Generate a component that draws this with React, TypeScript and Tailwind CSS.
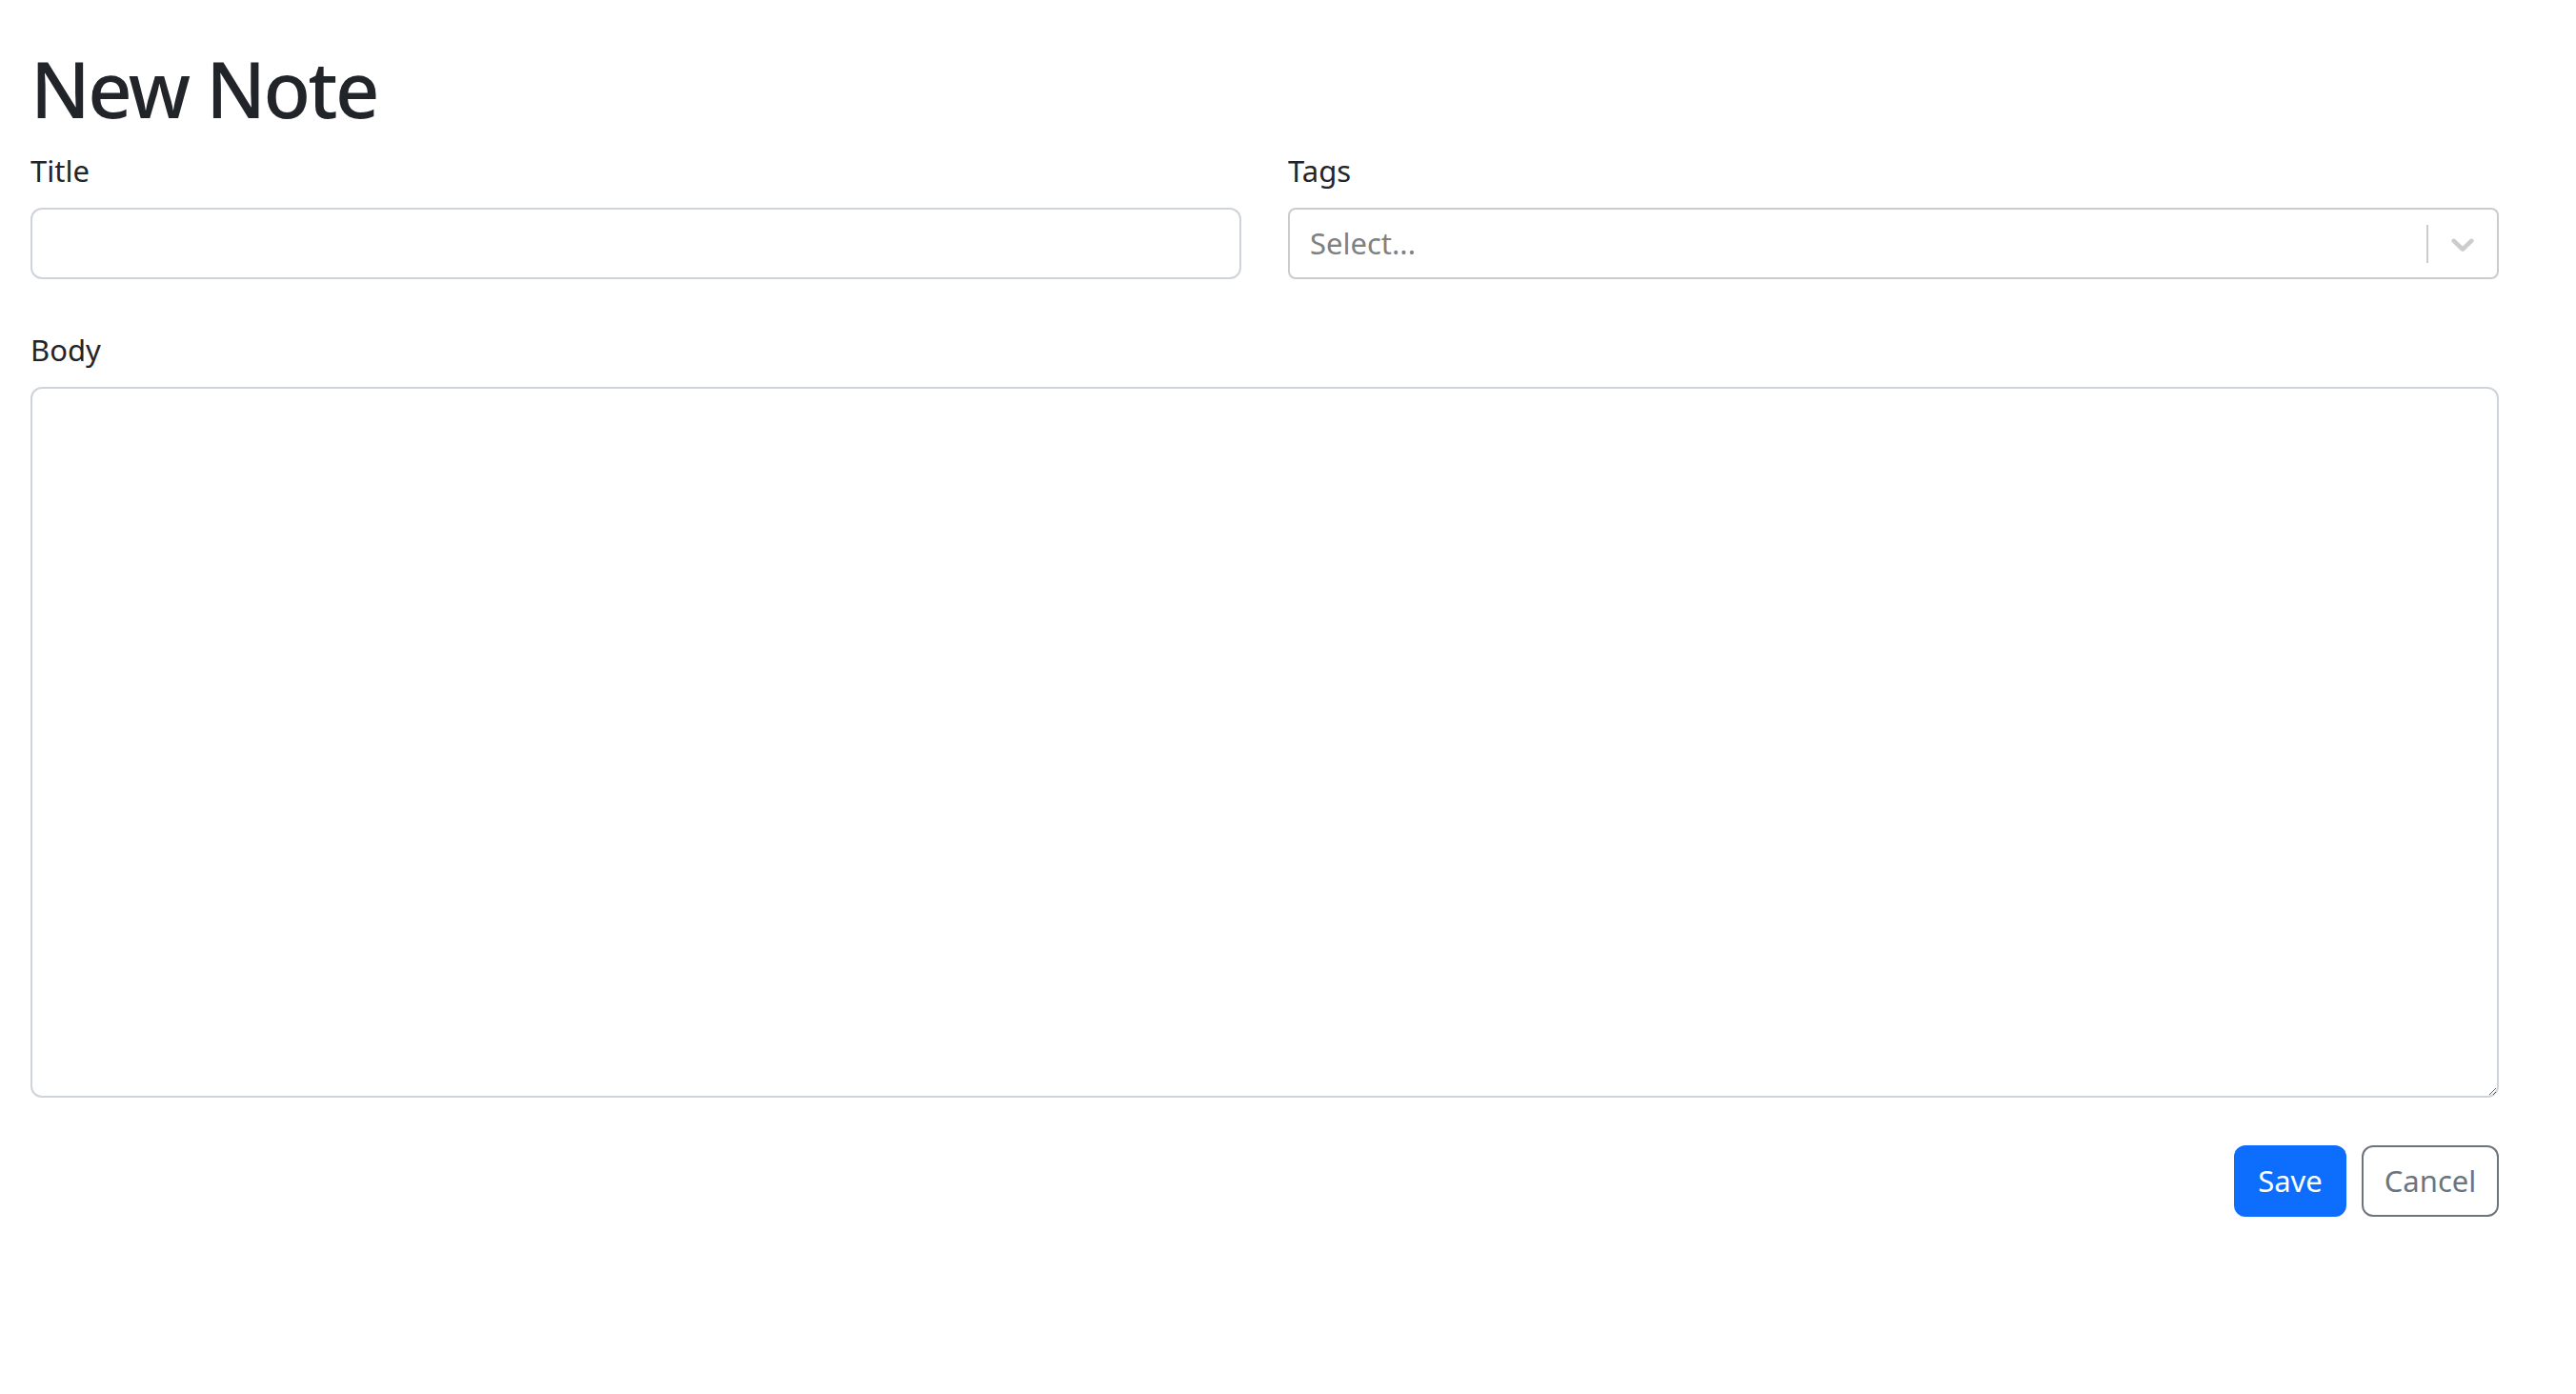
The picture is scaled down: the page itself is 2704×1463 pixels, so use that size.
import { useState } from "react";

const font = { fontFamily: '"Noto Sans", "Open Sans", sans-serif' };

const SelectChevron = () => (
  <svg viewBox="0 0 20 20" className="w-[40px] h-[40px] fill-[#cccccc]" aria-hidden="true">
    <path d="M4.516 7.548c0.436-0.446 1.043-0.481 1.576 0l3.908 3.747 3.908-3.747c0.533-0.481 1.141-0.446 1.574 0 0.436 0.445 0.408 1.197 0 1.615-0.406 0.418-4.695 4.502-4.695 4.502-0.217 0.223-0.502 0.335-0.787 0.335s-0.57-0.112-0.789-0.335c0 0-4.287-4.084-4.695-4.502s-0.436-1.17 0-1.615z" />
  </svg>
);

const App: React.FC = () => {
  const [title, setTitle] = useState("");
  const [body, setBody] = useState("");

  return (
    <div className="min-h-screen bg-white pl-[32px] pr-[81px] text-[#212529]" style={font}>
      <h1 className="pt-[44px] text-[81px] leading-[98px] font-medium tracking-[-2.5px]">New Note</h1>

      <form onSubmit={(e) => e.preventDefault()}>
        <div className="grid grid-cols-2 gap-x-[49px] mt-[13px]">
          <div>
            <label className="block text-[31px] leading-[48px] mb-[15px]">Title</label>
            <input
              type="text"
              value={title}
              onChange={(e) => setTitle(e.target.value)}
              className="block w-full h-[75px] border-2 border-[#ced4da] rounded-[12px] px-[24px] text-[32px] outline-none"
            />
          </div>
          <div>
            <label className="block text-[31px] leading-[48px] mb-[15px]">Tags</label>
            <div className="flex items-center h-[75px] border-2 border-[#cccccc] rounded-[8px] bg-white">
              <div className="flex-1 pl-[21px] text-[31px] text-[#808080]">Select...</div>
              <span className="w-[2px] h-[40px] bg-[#cccccc]" />
              <div className="px-[16px] flex items-center">
                <SelectChevron />
              </div>
            </div>
          </div>
        </div>

        <div className="mt-[50px]">
          <label className="block text-[31px] leading-[48px] mb-[15px]">Body</label>
          <textarea
            value={body}
            onChange={(e) => setBody(e.target.value)}
            className="block w-full h-[746px] border-2 border-[#ced4da] rounded-[12px] px-[24px] py-[12px] text-[32px] outline-none resize-y"
          />
        </div>

        <div className="flex justify-end gap-[16px] mt-[50px]">
          <button
            type="submit"
            className="w-[118px] h-[75px] rounded-[12px] bg-[#0d6efd] text-white text-[31px]"
          >
            Save
          </button>
          <button
            type="button"
            className="w-[144px] h-[75px] rounded-[12px] border-2 border-[#6c757d] bg-white text-[#6c757d] text-[31px]"
          >
            Cancel
          </button>
        </div>
      </form>
    </div>
  );
};

export default App;
